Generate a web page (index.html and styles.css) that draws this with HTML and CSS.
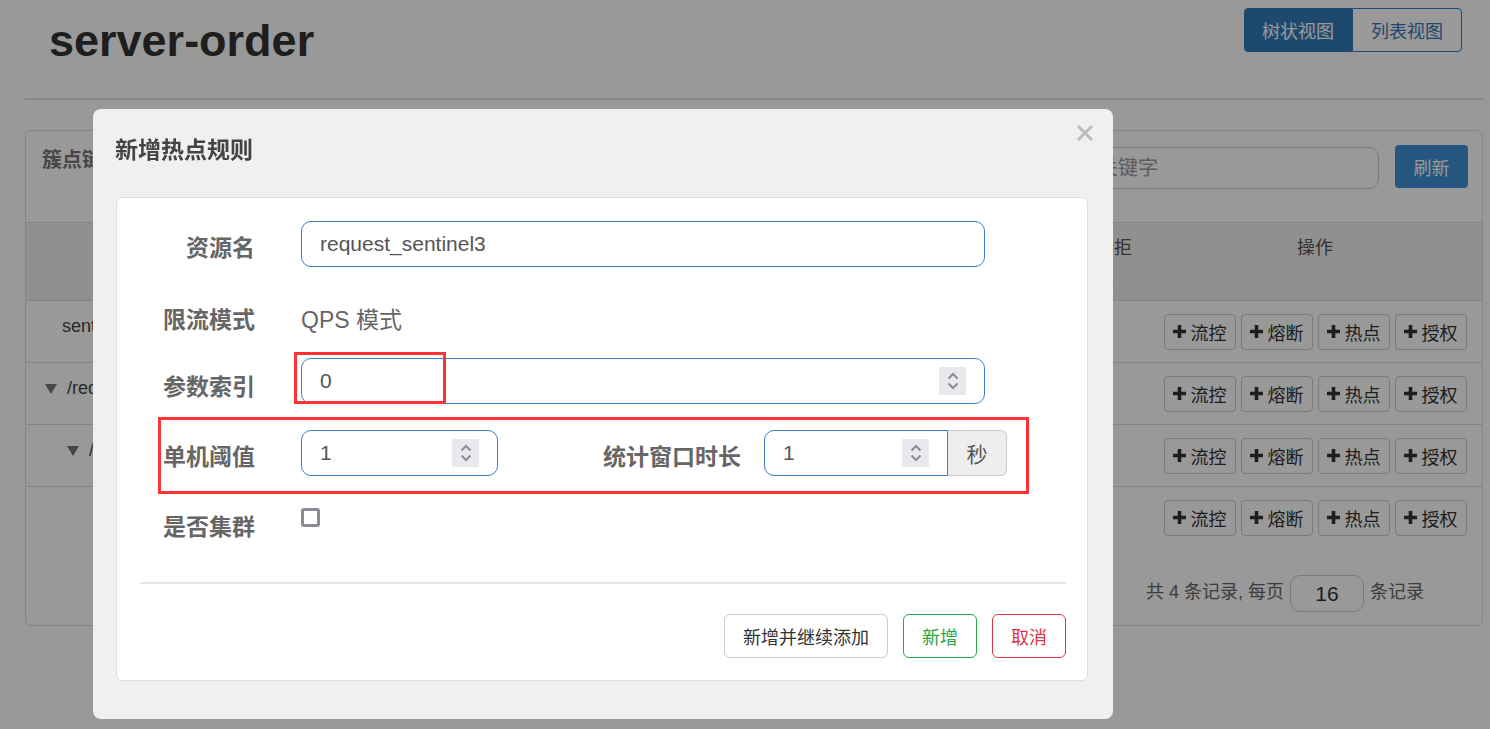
FILE: index.html
```html
<!DOCTYPE html>
<html lang="zh-CN">
<head>
    <meta charset="UTF-8">
    <meta name="viewport" content="width=device-width, initial-scale=1.0">
    <title>server-order</title>
    <link rel="stylesheet" href="styles.css">
</head>
<body>
    <div class="page">
        <div class="header">
            <h1 class="app-title">server-order</h1>
            <div class="view-toggle">
                <button class="toggle-btn active">树状视图</button>
                <button class="toggle-btn">列表视图</button>
            </div>
        </div>

        <div class="panel">
            <div class="panel-heading">
                <span class="panel-title">簇点链路</span>
                <div class="search-group">
                    <input class="search-input" type="text" placeholder="请输入关键字">
                    <button class="refresh-btn">刷新</button>
                </div>
            </div>

            <table class="resource-table">
                <colgroup>
                    <col class="col-name">
                    <col class="col-metric">
                    <col class="col-metric">
                    <col class="col-metric">
                    <col class="col-metric">
                    <col class="col-metric">
                    <col class="col-narrow">
                    <col class="col-ops">
                </colgroup>
                <thead>
                    <tr>
                        <th>资源名</th>
                        <th>通过QPS</th>
                        <th>拒绝QPS</th>
                        <th>并发数</th>
                        <th>平均RT</th>
                        <th>分钟通过</th>
                        <th>分钟拒绝</th>
                        <th>操作</th>
                    </tr>
                </thead>
                <tbody>
                    <tr>
                        <td class="name-cell level-0"><span class="name">sentinel_default_context</span></td>
                        <td>0</td><td>0</td><td>0</td><td>0</td><td>0</td><td>0</td>
                        <td>
                            <div class="ops">
                                <button class="op-btn"><svg width="13" height="13" viewBox="0 0 13 13"><path d="M4.7 0h3.6v4.7H13v3.6H8.3V13H4.7V8.3H0V4.7h4.7z" fill="#333"/></svg>流控</button>
                                <button class="op-btn"><svg width="13" height="13" viewBox="0 0 13 13"><path d="M4.7 0h3.6v4.7H13v3.6H8.3V13H4.7V8.3H0V4.7h4.7z" fill="#333"/></svg>熔断</button>
                                <button class="op-btn"><svg width="13" height="13" viewBox="0 0 13 13"><path d="M4.7 0h3.6v4.7H13v3.6H8.3V13H4.7V8.3H0V4.7h4.7z" fill="#333"/></svg>热点</button>
                                <button class="op-btn"><svg width="13" height="13" viewBox="0 0 13 13"><path d="M4.7 0h3.6v4.7H13v3.6H8.3V13H4.7V8.3H0V4.7h4.7z" fill="#333"/></svg>授权</button>
                            </div>
                        </td>
                    </tr>
                    <tr>
                        <td class="name-cell level-1"><span class="name"><span class="caret"></span>/request_sentinel3</span></td>
                        <td>0</td><td>0</td><td>0</td><td>0</td><td>0</td><td>0</td>
                        <td>
                            <div class="ops">
                                <button class="op-btn"><svg width="13" height="13" viewBox="0 0 13 13"><path d="M4.7 0h3.6v4.7H13v3.6H8.3V13H4.7V8.3H0V4.7h4.7z" fill="#333"/></svg>流控</button>
                                <button class="op-btn"><svg width="13" height="13" viewBox="0 0 13 13"><path d="M4.7 0h3.6v4.7H13v3.6H8.3V13H4.7V8.3H0V4.7h4.7z" fill="#333"/></svg>熔断</button>
                                <button class="op-btn"><svg width="13" height="13" viewBox="0 0 13 13"><path d="M4.7 0h3.6v4.7H13v3.6H8.3V13H4.7V8.3H0V4.7h4.7z" fill="#333"/></svg>热点</button>
                                <button class="op-btn"><svg width="13" height="13" viewBox="0 0 13 13"><path d="M4.7 0h3.6v4.7H13v3.6H8.3V13H4.7V8.3H0V4.7h4.7z" fill="#333"/></svg>授权</button>
                            </div>
                        </td>
                    </tr>
                    <tr>
                        <td class="name-cell level-2"><span class="name"><span class="caret"></span>/request_sentinel3</span></td>
                        <td>0</td><td>0</td><td>0</td><td>0</td><td>0</td><td>0</td>
                        <td>
                            <div class="ops">
                                <button class="op-btn"><svg width="13" height="13" viewBox="0 0 13 13"><path d="M4.7 0h3.6v4.7H13v3.6H8.3V13H4.7V8.3H0V4.7h4.7z" fill="#333"/></svg>流控</button>
                                <button class="op-btn"><svg width="13" height="13" viewBox="0 0 13 13"><path d="M4.7 0h3.6v4.7H13v3.6H8.3V13H4.7V8.3H0V4.7h4.7z" fill="#333"/></svg>熔断</button>
                                <button class="op-btn"><svg width="13" height="13" viewBox="0 0 13 13"><path d="M4.7 0h3.6v4.7H13v3.6H8.3V13H4.7V8.3H0V4.7h4.7z" fill="#333"/></svg>热点</button>
                                <button class="op-btn"><svg width="13" height="13" viewBox="0 0 13 13"><path d="M4.7 0h3.6v4.7H13v3.6H8.3V13H4.7V8.3H0V4.7h4.7z" fill="#333"/></svg>授权</button>
                            </div>
                        </td>
                    </tr>
                    <tr>
                        <td class="name-cell level-3"><span class="name">request_sentinel3</span></td>
                        <td>0</td><td>0</td><td>0</td><td>0</td><td>0</td><td>0</td>
                        <td>
                            <div class="ops">
                                <button class="op-btn"><svg width="13" height="13" viewBox="0 0 13 13"><path d="M4.7 0h3.6v4.7H13v3.6H8.3V13H4.7V8.3H0V4.7h4.7z" fill="#333"/></svg>流控</button>
                                <button class="op-btn"><svg width="13" height="13" viewBox="0 0 13 13"><path d="M4.7 0h3.6v4.7H13v3.6H8.3V13H4.7V8.3H0V4.7h4.7z" fill="#333"/></svg>熔断</button>
                                <button class="op-btn"><svg width="13" height="13" viewBox="0 0 13 13"><path d="M4.7 0h3.6v4.7H13v3.6H8.3V13H4.7V8.3H0V4.7h4.7z" fill="#333"/></svg>热点</button>
                                <button class="op-btn"><svg width="13" height="13" viewBox="0 0 13 13"><path d="M4.7 0h3.6v4.7H13v3.6H8.3V13H4.7V8.3H0V4.7h4.7z" fill="#333"/></svg>授权</button>
                            </div>
                        </td>
                    </tr>
                </tbody>
            </table>

            <div class="pager">共 4 条记录, 每页 <input class="page-size" type="text" value="16"> 条记录</div>
        </div>
    </div>

    <div class="backdrop"></div>

    <div class="modal">
        <div class="modal-header">
            <h4 class="modal-title">新增热点规则</h4>
            <span class="modal-close">
                <svg width="16" height="16" viewBox="0 0 16 16"><path d="M2 2L14 14M14 2L2 14" stroke="#bdbdbd" stroke-width="3" stroke-linecap="square"/></svg>
            </span>
        </div>

        <div class="modal-body">
            <div class="form-row">
                <label class="form-label">资源名</label>
                <input class="form-input wide" type="text" value="request_sentinel3">
            </div>

            <div class="form-row static-row">
                <label class="form-label">限流模式</label>
                <p class="static-text">QPS 模式</p>
            </div>

            <div class="form-row index-row">
                <label class="form-label">参数索引</label>
                <div class="number-field wide">
                    <span>0</span>
                    <span class="spinner"><svg width="14" height="20" viewBox="0 0 14 20"><path d="M2.5 7.5L7 3l4.5 4.5M2.5 12.5L7 17l4.5-4.5" fill="none" stroke="#8e8b99" stroke-width="2"/></svg></span>
                </div>
            </div>

            <div class="form-row">
                <label class="form-label">单机阈值</label>
                <div class="number-field short">
                    <span>1</span>
                    <span class="spinner"><svg width="14" height="20" viewBox="0 0 14 20"><path d="M2.5 7.5L7 3l4.5 4.5M2.5 12.5L7 17l4.5-4.5" fill="none" stroke="#8e8b99" stroke-width="2"/></svg></span>
                </div>
                <label class="form-label inline-label">统计窗口时长</label>
                <div class="input-group">
                    <div class="number-field grouped">
                        <span>1</span>
                        <span class="spinner"><svg width="14" height="20" viewBox="0 0 14 20"><path d="M2.5 7.5L7 3l4.5 4.5M2.5 12.5L7 17l4.5-4.5" fill="none" stroke="#8e8b99" stroke-width="2"/></svg></span>
                    </div>
                    <span class="addon">秒</span>
                </div>
            </div>

            <div class="form-row last-row">
                <label class="form-label">是否集群</label>
                <span class="checkbox"></span>
            </div>

            <hr class="divider">

            <div class="modal-footer">
                <button class="btn">新增并继续添加</button>
                <button class="btn btn-success">新增</button>
                <button class="btn btn-danger">取消</button>
            </div>

            <!-- red annotation frames drawn over the form -->
            <div class="mark mark-index"></div>
            <div class="mark mark-threshold"></div>
        </div>
    </div>
</body>
</html>
```

FILE: styles.css
```css
body {
    margin: 0;
    font-family: "Liberation Sans", "Noto Sans CJK SC", sans-serif;
    background-color: #fff;
    color: #333;
}

button,
input {
    font-family: inherit;
}

.page {
    padding: 0 7px 0 25px;
}

.header {
    display: flex;
    justify-content: space-between;
    align-items: flex-start;
    height: 98px;
    padding: 0 21px 0 24px;
    border-bottom: 2px solid #e3e3e3;
}

.app-title {
    margin: 16px 0 0;
    font-size: 45px;
    line-height: 50px;
    font-weight: bold;
    color: #333;
}

.view-toggle {
    display: flex;
    margin-top: 8px;
}

.toggle-btn {
    height: 44px;
    width: 110px;
    font-size: 18px;
    border: 1px solid #337ab7;
    background-color: #fff;
    color: #337ab7;
    border-radius: 0 4px 4px 0;
}

.toggle-btn.active {
    width: 108px;
    background-color: #337ab7;
    color: #fff;
    border-radius: 4px 0 0 4px;
}

.panel {
    margin-top: 30px;
    border: 1px solid #dedede;
    border-radius: 6px;
}

.panel-heading {
    display: flex;
    justify-content: space-between;
    align-items: flex-start;
    height: 91px;
    box-sizing: border-box;
    padding: 14px 14px 0 16px;
}

.panel-title {
    font-size: 20px;
    line-height: 30px;
    font-weight: bold;
    color: #777;
}

.search-group {
    display: flex;
    gap: 16px;
}

.search-input {
    width: 354px;
    height: 42px;
    margin-top: 2px;
    box-sizing: border-box;
    padding: 0 12px;
    border: 1px solid #ccc;
    border-radius: 10px;
    font-size: 20px;
}

.search-input::placeholder {
    color: #999;
}

.refresh-btn {
    width: 73px;
    height: 43px;
    border: none;
    border-radius: 4px;
    background-color: #3e8fd4;
    color: #fff;
    font-size: 18px;
}

.resource-table {
    width: 100%;
    border-collapse: collapse;
    table-layout: fixed;
    font-size: 18px;
}

.col-name { width: 436px; }
.col-metric { width: 120px; }
.col-narrow { width: 86px; }
.col-ops { width: 334px; }

.resource-table th {
    background-color: #f0f0f0;
    border-top: 1px solid #ddd;
    padding: 10px 8px 7px;
    line-height: 30px;
    font-weight: normal;
    color: #555;
    text-align: center;
    vertical-align: top;
}

.resource-table td {
    height: 61px;
    padding: 0 8px;
    border-top: 1px solid #ddd;
    color: #444;
    text-align: center;
    vertical-align: middle;
}

.resource-table td.name-cell {
    text-align: left;
    white-space: nowrap;
    overflow: hidden;
}

.name {
    display: inline-block;
    margin-bottom: 10px;
}

.level-0 { padding-left: 36px !important; }
.level-1 { padding-left: 19px !important; }
.level-2 { padding-left: 41px !important; }
.level-3 { padding-left: 86px !important; }

.caret {
    display: inline-block;
    width: 0;
    height: 0;
    margin-right: 10px;
    border-left: 6px solid transparent;
    border-right: 6px solid transparent;
    border-top: 10px solid #777;
    vertical-align: middle;
}

.ops {
    display: flex;
    justify-content: center;
    gap: 5px;
}

.op-btn {
    display: inline-flex;
    align-items: center;
    justify-content: center;
    gap: 5px;
    width: 72px;
    height: 36px;
    padding: 0;
    border: 1px solid #ccc;
    border-radius: 4px;
    background-color: #fff;
    font-size: 18px;
    color: #333;
}

.pager {
    text-align: right;
    padding: 27px 58px 13px 0;
    font-size: 18px;
    color: #666;
}

.page-size {
    width: 74px;
    height: 37px;
    box-sizing: border-box;
    margin: 0 1px;
    border: 1px solid #ccc;
    border-radius: 10px;
    text-align: center;
    font-size: 21px;
    color: #333;
    vertical-align: middle;
}

.backdrop {
    position: fixed;
    top: 0;
    left: 0;
    right: 0;
    bottom: 0;
    background-color: rgba(0, 0, 0, 0.4);
}

.modal {
    position: fixed;
    left: 93px;
    top: 109px;
    width: 1020px;
    background-color: #f0f0f0;
    border-radius: 8px;
}

.modal-header {
    position: relative;
    padding: 26px 22px 32px;
}

.modal-title {
    margin: 0;
    font-size: 23px;
    line-height: 30px;
    font-weight: bold;
    color: #444;
}

.modal-close {
    position: absolute;
    top: 16px;
    right: 20px;
    line-height: 0;
}

.modal-body {
    position: relative;
    margin: 0 25px 38px 23px;
    padding: 23px 21px 22px 23px;
    background-color: #fff;
    border: 1px solid #ddd;
    border-radius: 6px;
}

.form-row {
    display: flex;
    align-items: flex-start;
    margin-bottom: 24px;
}

.form-label {
    width: 115px;
    flex-shrink: 0;
    margin-right: 46px;
    padding-top: 12px;
    text-align: right;
    font-size: 23px;
    line-height: 30px;
    font-weight: bold;
    color: #666;
}

.static-row {
    margin-bottom: 23px;
}

.static-row .form-label {
    padding-top: 14px;
}

.static-text {
    margin: 0;
    padding-top: 14px;
    font-size: 23px;
    line-height: 30px;
    color: #666;
}

.index-row {
    margin-bottom: 26px;
}

.index-row .form-label {
    padding-top: 14px;
}

.last-row {
    margin-bottom: 0;
}

.form-input {
    height: 46px;
    box-sizing: border-box;
    padding: 0 18px;
    border: 1px solid #3b7fc2;
    border-radius: 10px;
    font-size: 21px;
    color: #555;
    outline: none;
}

.number-field {
    display: flex;
    align-items: center;
    height: 46px;
    box-sizing: border-box;
    padding-left: 18px;
    border: 1px solid #3b7fc2;
    border-radius: 10px;
    font-size: 21px;
    color: #555;
}

.wide { width: 684px; }
.short { width: 197px; }

.spinner {
    display: flex;
    align-items: center;
    justify-content: center;
    width: 27px;
    height: 28px;
    margin-left: auto;
    margin-right: 18px;
    background-color: #e9e8ee;
}

.inline-label {
    width: 243px;
    margin-right: 23px;
}

.input-group {
    display: flex;
}

.number-field.grouped {
    width: 184px;
    border-radius: 10px 0 0 10px;
}

.addon {
    display: flex;
    align-items: center;
    justify-content: center;
    width: 59px;
    height: 46px;
    box-sizing: border-box;
    border: 1px solid #ccc;
    border-left: none;
    border-radius: 0 6px 6px 0;
    background-color: #eee;
    font-size: 21px;
    color: #555;
}

.checkbox {
    width: 19px;
    height: 19px;
    box-sizing: border-box;
    margin-top: 8px;
    border: 3px solid #8b8b96;
    border-radius: 3px;
}

.divider {
    margin: 40px 0 30px;
    border: 0;
    border-top: 2px solid #e5e5e5;
}

.modal-footer {
    display: flex;
    justify-content: flex-end;
    gap: 15px;
}

.btn {
    height: 44px;
    padding: 0 18px;
    border: 1px solid #ccc;
    border-radius: 6px;
    background-color: #fff;
    font-size: 18px;
    color: #333;
}

.btn-success {
    border-color: #28a745;
    color: #28a745;
}

.btn-danger {
    border-color: #dc3545;
    color: #dc3545;
}

.mark {
    position: absolute;
    box-sizing: border-box;
    border: 3px solid #f33;
}

.mark-index {
    left: 177px;
    top: 154px;
    width: 152px;
    height: 52px;
}

.mark-threshold {
    left: 41px;
    top: 219px;
    width: 871px;
    height: 77px;
}
```
